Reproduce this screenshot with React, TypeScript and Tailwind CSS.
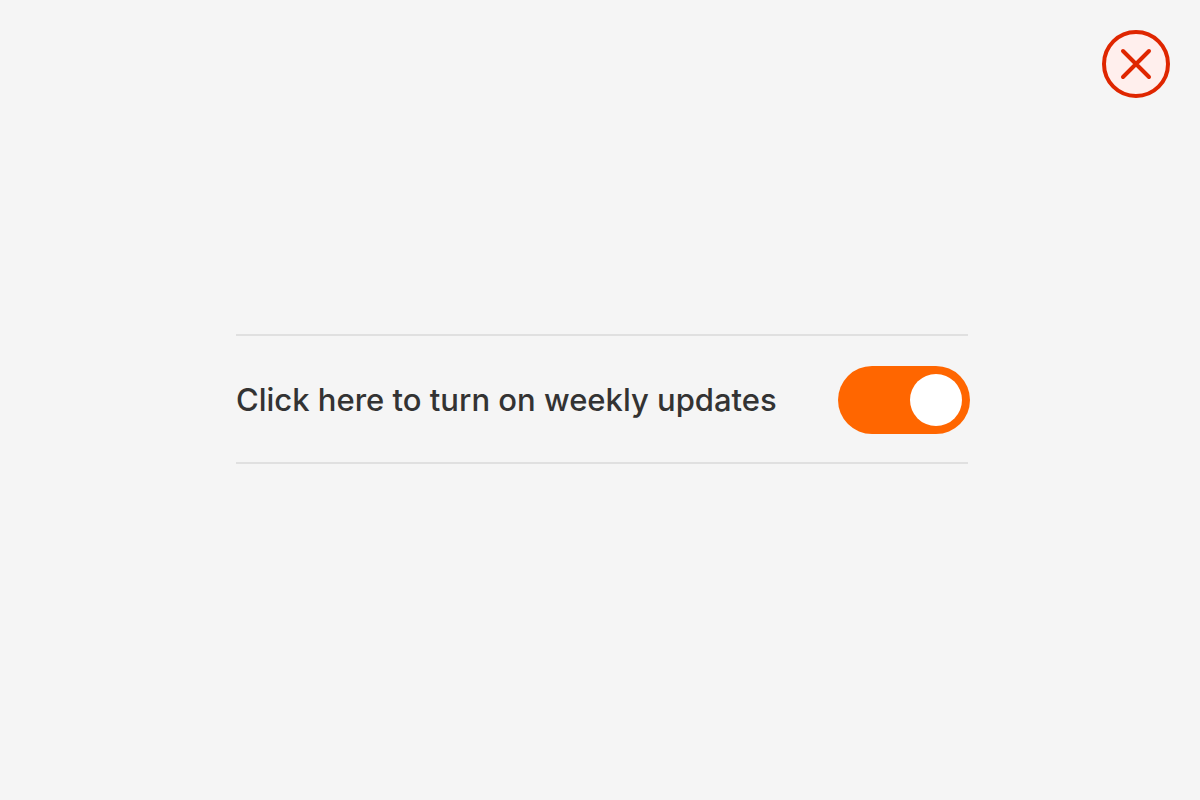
import { useState } from "react";

const CloseButton = () => {
  return (
    <button
      type="button"
      aria-label="Close"
      className="flex size-[68px] cursor-pointer items-center justify-center rounded-full border-4 border-[#df2600] bg-[#ffefed] text-[#df2600]"
    >
      <svg width="32" height="32" viewBox="0 0 32 32" fill="none" stroke="currentColor" strokeWidth="4" strokeLinecap="round">
        <path d="M3 3L29 29M29 3L3 29" />
      </svg>
    </button>
  );
};

const App = () => {
  const [weekly, setWeekly] = useState(true);

  return (
    <div className="flex min-h-screen flex-col bg-[#f5f5f5] font-['Inter',sans-serif] text-[#333333]">
      <header className="flex justify-end p-[30px]">
        <CloseButton />
      </header>
      <main className="flex flex-1 items-center justify-center pb-[130px] pl-1">
        <div className="flex w-full max-w-[732px] items-center justify-between border-y-2 border-[#e0e0e0] pt-[30px] pb-7">
          <label htmlFor="weekly" className="text-[31px] leading-10 font-medium">
            Click here to turn on weekly updates
          </label>
          <input
            id="weekly"
            type="checkbox"
            role="switch"
            checked={weekly}
            onChange={(e) => setWeekly(e.target.checked)}
            className="-mr-0.5 flex h-[68px] w-[132px] shrink-0 cursor-pointer appearance-none rounded-full bg-gray-400 p-2 before:size-[52px] before:rounded-full before:bg-white checked:bg-[#ff6600] checked:before:ml-auto"
          />
        </div>
      </main>
    </div>
  );
};

export default App;
